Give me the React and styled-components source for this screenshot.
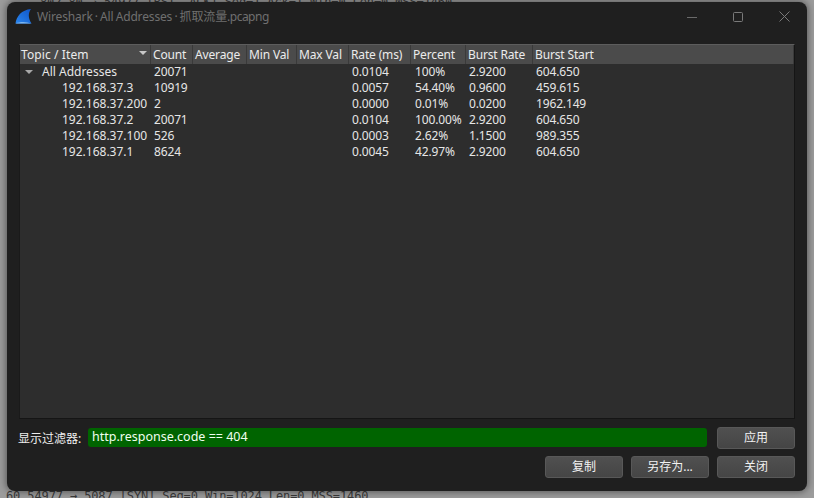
import React from 'react';
import styled, { createGlobalStyle } from 'styled-components';

const Global = createGlobalStyle`
  html, body { margin: 0; padding: 0; background: #8c8c8c; overflow: hidden; }
  #root { width: 814px; height: 498px; }
`;

const FONT = `"Noto Sans", "Noto Sans CJK SC", sans-serif`;
const COLS = '131px 42px 54px 50px 52px 62px 55px 67px 1fr';

const Desktop = styled.div`
  position: relative;
  width: 814px;
  height: 498px;
  padding: 2px 7px 7px 7px;
  box-sizing: border-box;
  background: #9c9c9c;
  overflow: hidden;
  font-family: ${FONT};
`;

const BehindText = styled.div`
  position: absolute;
  left: ${p => p.$left}px;
  ${p => p.$edge}: -4px;
  font: 12px "DejaVu Sans Mono", monospace;
  letter-spacing: -0.12px;
  line-height: 12px;
  color: #3a3a3a;
  white-space: pre;
`;

const Window = styled.div`
  position: relative;
  height: 489px;
  background: #1f1f1f;
  border-radius: 8px;
  box-shadow: 0 0 7px 1px rgba(0, 0, 0, 0.45);
  display: flex;
  flex-direction: column;
  padding: 0 12px 0 12px;
  box-sizing: border-box;
`;

const TitleBar = styled.div`
  height: 42px;
  flex: none;
  display: flex;
  align-items: flex-start;
  margin: 0 -12px;
  padding: 6px 0 0 8px;
  box-sizing: border-box;
`;

const TitleText = styled.div`
  margin-left: 5px;
  font-size: 12px;
  line-height: 17px;
  color: #6f6f6f;
  flex: 1;
  white-space: nowrap;
  letter-spacing: -0.15px;
  word-spacing: -0.8px;
`;

const TitleExt = styled.span`
  letter-spacing: -0.5px;
`;

const WinButtons = styled.div`
  display: flex;
  align-items: center;
  gap: 36px;
  margin: 3px 17px 0 0;
`;

const Table = styled.div`
  height: 375px;
  flex: none;
  background: #2d2d2d;
  border: 1px solid #151515;
  border-top: 1px solid #5d5d5d;
  border-left-color: #1a1a1a;
  box-sizing: border-box;
`;

const Header = styled.div`
  display: grid;
  grid-template-columns: ${COLS};
  height: 19px;
  background: #4b4b4b;
`;

const HeadCell = styled.div`
  position: relative;
  padding-left: ${p => (p.$wide ? 1 : 2)}px;
  font-size: 12px;
  line-height: 19px;
  color: #ececec;
  border-right: 1px solid #3a3a3a;
  white-space: nowrap;
  letter-spacing: ${p => (p.$wide ? '0.1px' : '-0.15px')};
`;

const SortCaret = styled.span`
  position: absolute;
  right: 3px;
  top: 6px;
  width: 0;
  height: 0;
  border-left: 4px solid transparent;
  border-right: 4px solid transparent;
  border-top: 4px solid #c8c8c8;
`;

const Rows = styled.div``;

const Row = styled.div`
  display: grid;
  grid-template-columns: ${COLS};
  height: 16px;
`;

const Cell = styled.div`
  position: relative;
  padding-left: ${p => p.$indent ?? 3}px;
  font-size: 12px;
  line-height: 16px;
  color: #e6e6e6;
  white-space: nowrap;
  letter-spacing: ${p => (p.$wide ? '0' : '-0.15px')};
`;

const Expander = styled.span`
  position: absolute;
  left: 5px;
  top: 6px;
  width: 0;
  height: 0;
  border-left: 4px solid transparent;
  border-right: 4px solid transparent;
  border-top: 4px solid #a8a8a8;
`;

const FilterRow = styled.div`
  display: flex;
  align-items: center;
  height: 23px;
  margin-top: 7px;
  flex: none;
`;

const FilterLabel = styled.div`
  width: 69px;
  flex: none;
  margin-left: -1px;
  font-size: 12px;
  color: #eeeeee;
  white-space: nowrap;
`;

const FilterInput = styled.div`
  width: 619px;
  height: 19px;
  flex: none;
  background: #006400;
  border-radius: 3px;
  margin: 0 10px 0 1px;
  padding-left: 4px;
  box-sizing: border-box;
  font-size: 12.5px;
  line-height: 17px;
  color: #f0fff0;
  white-space: nowrap;
`;

const ActionRow = styled.div`
  display: flex;
  justify-content: flex-end;
  gap: 8px;
  margin-top: 7px;
  flex: none;
`;

const Button = styled.button`
  width: 78px;
  height: 22px;
  padding: 0;
  background: linear-gradient(#505050, #454545);
  border: 1px solid #585858;
  border-radius: 3px;
  color: #f2f2f2;
  font-family: ${FONT};
  font-size: 12px;
  line-height: 20px;
`;

const columns = ['Topic / Item','Count','Average','Min Val','Max Val','Rate (ms)','Percent','Burst Rate','Burst Start'];
const data = [
  ['192.168.37.3','10919','0.0057','54.40%','0.9600','459.615'],
  ['192.168.37.200','2','0.0000','0.01%','0.0200','1962.149'],
  ['192.168.37.2','20071','0.0104','100.00%','2.9200','604.650'],
  ['192.168.37.100','526','0.0003','2.62%','1.1500','989.355'],
  ['192.168.37.1','8624','0.0045','42.97%','2.9200','604.650'],
];

const Fin = () => (
  <svg width="17" height="16" viewBox="0 0 17 16">
    <defs>
      <linearGradient id="finFill" x1="1" y1="0" x2="0" y2="1">
        <stop offset="0" stopColor="#0f55c8" />
        <stop offset="1" stopColor="#2a86ee" />
      </linearGradient>
    </defs>
    <path d="M0.5 15.5 C1.5 8 6.5 2 16 1 C13 5 13 10 16.5 15.5 Z" fill="url(#finFill)" />
    <path d="M0.5 15.5 C5 13.5 11 13.5 16.5 15.5 Z" fill="#7db6f0" />
  </svg>
);

const DataRow = ({ name, count, rate, pct, burst, start, top }) => (
  <Row>
    <Cell $wide $indent={top ? 22 : 42}>{top && <Expander />}{name}</Cell>
    <Cell $indent={3}>{count}</Cell>
    <Cell /><Cell /><Cell />
    <Cell $indent={3}>{rate}</Cell>
    <Cell $indent={4}>{pct}</Cell>
    <Cell $indent={3}>{burst}</Cell>
    <Cell $indent={3}>{start}</Cell>
  </Row>
);

export default function App() {
  return (
    <Desktop>
      <Global />
      <BehindText $edge="top" $left={40}>802 80 → 54977 [RST, ACK] Seq=1 Ack=1 Win=0 Len=0 MSS=1460</BehindText>
      <BehindText $edge="bottom" $left={6}>60 54977 → 5087 [SYN] Seq=0 Win=1024 Len=0 MSS=1460</BehindText>
      <Window>
        <TitleBar>
          <Fin />
          <TitleText>Wireshark · All Addresses · 抓取流量<TitleExt>.pcapng</TitleExt></TitleText>
          <WinButtons>
            <svg width="10" height="10" viewBox="0 0 10 10"><path d="M0 5.5H10" stroke="#6a6a6a" /></svg>
            <svg width="10" height="10" viewBox="0 0 10 10"><rect x="0.5" y="0.5" width="9" height="9" rx="1" fill="none" stroke="#7a7a7a" /></svg>
            <svg width="11" height="11" viewBox="0 0 11 11"><path d="M0.5 0.5L10.5 10.5M10.5 0.5L0.5 10.5" stroke="#7a7a7a" /></svg>
          </WinButtons>
        </TitleBar>
        <Table>
          <Header>
            {columns.map((c, i) => (
              <HeadCell key={c} $wide={i === 0}>{c}{i === 0 && <SortCaret />}</HeadCell>
            ))}
          </Header>
          <Rows>
            <DataRow top name="All Addresses" count="20071" rate="0.0104" pct="100%" burst="2.9200" start="604.650" />
            {data.map(d => (
              <DataRow key={d[0]} name={d[0]} count={d[1]} rate={d[2]} pct={d[3]} burst={d[4]} start={d[5]} />
            ))}
          </Rows>
        </Table>
        <FilterRow>
          <FilterLabel>显示过滤器:</FilterLabel>
          <FilterInput>http.response.code == 404</FilterInput>
          <Button>应用</Button>
        </FilterRow>
        <ActionRow>
          <Button>复制</Button>
          <Button>另存为...</Button>
          <Button>关闭</Button>
        </ActionRow>
      </Window>
    </Desktop>
  );
}
